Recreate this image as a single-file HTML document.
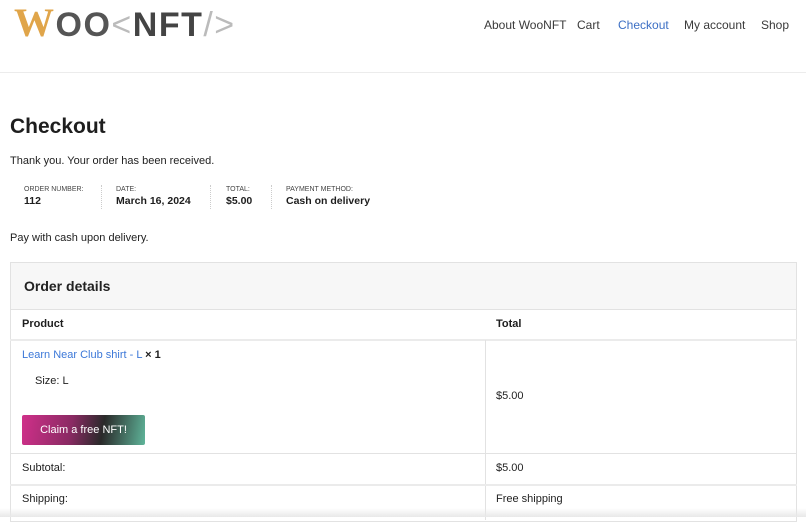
<!DOCTYPE html>
<html><head><meta charset="utf-8"><style>
*{margin:0;padding:0;box-sizing:border-box}
body{width:806px;height:517px;overflow:hidden;background:#fff;font-family:"Liberation Sans",sans-serif;color:#1e1e1e;position:relative}
.abs{position:absolute;white-space:nowrap}
.nav{font-size:12px;color:#3a3a3a;top:18px}
.logo{top:3px;left:14px;font-size:34px;font-weight:bold;letter-spacing:1.5px;line-height:40px}
.hr{position:absolute;left:0;right:0;top:72px;border-top:1px solid #ececec}
h1{position:absolute;left:10px;top:115px;font-size:21px;font-weight:bold;color:#1e1e1e}
.lbl{font-size:7px;color:#444;top:186px}
.val{font-size:10.5px;font-weight:bold;top:195px}
.sep{position:absolute;top:185px;height:24px;border-left:1px dotted #ccc}
.t{font-size:11px}
.box{position:absolute;left:10px;width:787px;border:1px solid #e2e2e2}
.line{position:absolute;left:10px;width:787px;border-top:1px solid #e2e2e2}
</style></head><body>
<div class="abs logo"><span style="color:#e0a54a;font-family:'Liberation Serif',serif;font-size:40px">W</span><span style="color:#555">OO</span><span style="color:#bbb;font-weight:normal">&lt;</span><span style="color:#444">NFT</span><span style="color:#bbb;font-weight:normal">/&gt;</span></div>
<div class="abs nav" style="left:484px">About WooNFT</div>
<div class="abs nav" style="left:577px">Cart</div>
<div class="abs nav" style="left:618px;color:#3c6fc4">Checkout</div>
<div class="abs nav" style="left:684px">My account</div>
<div class="abs nav" style="left:761px">Shop</div>
<div class="hr"></div>
<h1>Checkout</h1>
<div class="abs t" style="left:10px;top:155px">Thank you. Your order has been received.</div>
<div class="abs lbl" style="left:24px">ORDER NUMBER:</div><div class="abs val" style="left:24px">112</div>
<div class="sep" style="left:101px"></div>
<div class="abs lbl" style="left:116px">DATE:</div><div class="abs val" style="left:116px">March 16, 2024</div>
<div class="sep" style="left:210px"></div>
<div class="abs lbl" style="left:226px">TOTAL:</div><div class="abs val" style="left:226px">$5.00</div>
<div class="sep" style="left:271px"></div>
<div class="abs lbl" style="left:286px">PAYMENT METHOD:</div><div class="abs val" style="left:286px">Cash on delivery</div>
<div class="abs t" style="left:10px;top:232px">Pay with cash upon delivery.</div>
<div class="box" style="top:262px;height:260px"></div>
<div class="abs" style="left:11px;top:263px;width:785px;height:46px;background:#f7f7f7"></div>
<div class="abs" style="left:24px;top:278px;font-size:14px;font-weight:bold;color:#222">Order details</div>
<div class="line" style="top:309px"></div>
<div class="abs t" style="left:22px;top:318px;font-weight:bold">Product</div>
<div class="abs t" style="left:496px;top:318px;font-weight:bold">Total</div>
<div class="line" style="top:339px;border-top:2px solid #ebebeb"></div>
<div class="abs" style="left:485px;top:340px;height:180px;border-left:1px solid #e2e2e2"></div>
<div class="abs t" style="left:22px;top:349px;color:#3c78d8">Learn Near Club shirt - L <b style="color:#1e1e1e">× 1</b></div>
<div class="abs t" style="left:35px;top:375px">Size: L</div>
<div class="abs t" style="left:496px;top:390px">$5.00</div>
<div class="abs" style="left:22px;top:415px;width:123px;height:30px;border-radius:2px;background:linear-gradient(100deg,#d0308a 0%,#8a2a63 40%,#2a2a2a 65%,#5fb59a 100%);color:#fff;font-size:11px;text-align:center;line-height:30px">Claim a free NFT!</div>
<div class="line" style="top:453px"></div>
<div class="abs t" style="left:22px;top:462px">Subtotal:</div>
<div class="abs t" style="left:496px;top:462px">$5.00</div>
<div class="line" style="top:484px;border-top:2px solid #ebebeb"></div>
<div class="abs t" style="left:22px;top:493px">Shipping:</div>
<div class="abs t" style="left:496px;top:493px">Free shipping</div>
<div class="abs" style="left:0;top:508px;width:806px;height:9px;background:linear-gradient(#fff0,#e8e8e8)"></div>
</body></html>
